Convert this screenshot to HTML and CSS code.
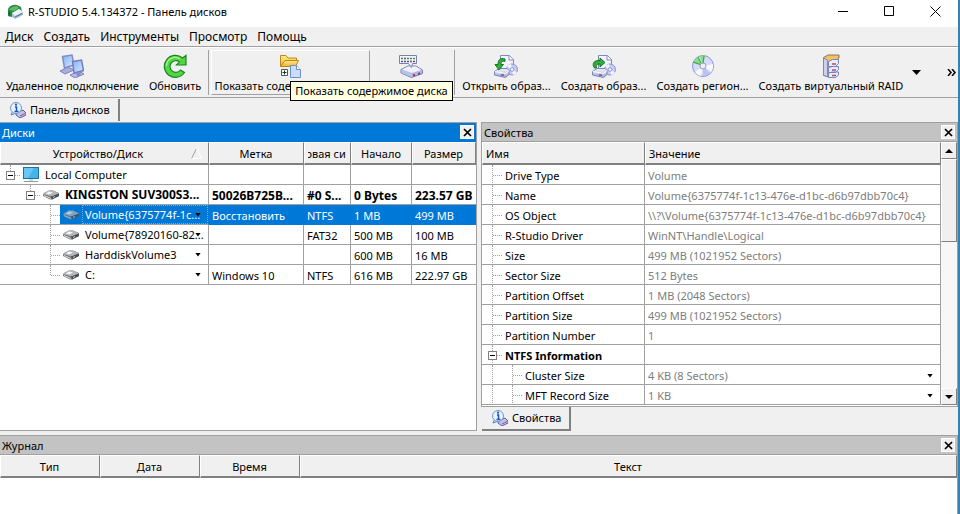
FILE: index.html
```html
<!DOCTYPE html>
<html lang="ru">
<head>
    <meta charset="UTF-8">
    <meta name="viewport" content="width=device-width, initial-scale=1.0">
    <title>R-STUDIO 5.4.134372 - Панель дисков</title>
    <link rel="stylesheet" href="styles.css">
</head>
<body>
    <svg class="sprite" aria-hidden="true">
        <linearGradient id="steel" x1="0" y1="0" x2="0" y2="1">
            <stop offset="0" stop-color="#f4f6fd"/><stop offset="1" stop-color="#9ba6d6"/>
        </linearGradient>
        <linearGradient id="gold" x1="0" y1="0" x2="0" y2="1">
            <stop offset="0" stop-color="#ffeb8a"/><stop offset="1" stop-color="#eeb52c"/>
        </linearGradient>
        <linearGradient id="screen" x1="0" y1="0" x2="1" y2="1">
            <stop offset="0" stop-color="#7fb2f0"/><stop offset="1" stop-color="#d9ecff"/>
        </linearGradient>
        <symbol id="drive" viewBox="0 0 16 10">
            <path d="M0 4.500L1 3 6 .5h4l6 2.500v3L9 9.500H7L0 6z" fill="#77797c"/>
            <path d="M0 4L6 .5h4L16 3.500 9 6.500z" fill="#b4b6b9"/>
            <path d="M3 3.500L6 1.500l4 1-4 2z" fill="#f6f6f6"/>
            <path d="M8 6.500l8-3V6L9 9.500z" fill="#4c4e52"/>
            <path d="M1 5.500l7 3" stroke="#dadada"/>
            <path d="M10 7.500l2-1" stroke="#c5d8c5"/>
        </symbol>
        <symbol id="info" viewBox="0 0 16 16">
            <path d="M6 11l7-3 3 3v2l-6 3-4-3z" fill="#bcc4ea" stroke="#5560a8"/>
            <path d="M10 14l5-2.500" stroke="#b04a70"/>
            <path d="M2.500 9.500L1 13l4-1.500z" fill="#d9ebff" stroke="#5c7fbf"/>
            <circle cx="6" cy="6" r="5.500" fill="#e6f2ff" stroke="#7097d0"/>
            <path d="M5 5h1.500v4M4.500 9.500h4" stroke="#1b55b8" stroke-width="1.500" fill="none"/>
            <circle cx="6" cy="2.700" r="1.100" fill="#1b55b8"/>
        </symbol>
        <symbol id="image" viewBox="0 0 24 24">
            <path d="M6.500 15V1.500h9l4 4V15z" fill="#f3f4fd" stroke="#8287c4"/>
            <path d="M15 1.500V6h4.500" fill="#fff" stroke="#8287c4"/>
            <circle cx="18" cy="15.500" r="5.500" fill="#c9ccf5" stroke="#8c91cf"/>
            <path d="M18 15.500l-5-3a6 6 0 0 1 4-2.500zM18 15.500l5 3a6 6 0 0 1-4 2.500z" fill="#f6f5ff"/>
            <circle cx="18" cy="15.500" r="1.800" fill="#fff" stroke="#8c91cf"/>
            <path d="M.5 17.500L5 14.500h8l2 2v4l-3.500 3L.5 21z" fill="url(#steel)" stroke="#7a84ba"/>
            <path d="M1 17.500l10.500 2L15 16.500" fill="none" stroke="#fff"/>
            <path d="M7 21h3" stroke="#b33a78" stroke-width="1.500"/>
        </symbol>
        <symbol id="cross" viewBox="0 0 9 9">
            <path d="M1 1l7 7M8 1L1 8" stroke="#000" stroke-width="1.700"/>
        </symbol>
    </svg>

    <header class="titlebar">
        <svg class="app-icon" viewBox="0 0 16 16">
            <path d="M1 8a7 6 0 0 1 9-7l4 2 1 5-3 5H5L1 12z" fill="#268b42"/>
            <path d="M2 6c2-3 5-4 8-4l2 2-5 3z" fill="#62b865"/>
            <path d="M1 9l2-2v6z" fill="#155c46"/>
            <path d="M5 9l7-4 4 3v3l-8 4-3-2z" fill="#a9bfd0"/>
            <path d="M5 9l7-4 4 3-8 4z" fill="#edf4f8"/>
            <path d="M8 13l7-3.500" stroke="#4b7191"/>
        </svg>
        <h1 class="title">R-STUDIO 5.4.134372 - Панель дисков</h1>
        <div class="window-buttons">
            <button aria-label="Свернуть"><svg width="11" height="11"><path d="M0 5.500h10" stroke="#000"/></svg></button>
            <button aria-label="Развернуть"><svg width="11" height="11"><path d="M.5 .5h9v9h-9z" fill="none" stroke="#000"/></svg></button>
            <button aria-label="Закрыть"><svg width="11" height="11"><path d="M.5 .5l10 10M10.500 .5l-10 10" stroke="#000"/></svg></button>
        </div>
    </header>

    <nav class="menu">
        <button>Диск</button>
        <button>Создать</button>
        <button>Инструменты</button>
        <button>Просмотр</button>
        <button>Помощь</button>
    </nav>

    <div class="toolbar">
        <button class="tool">
            <svg viewBox="0 0 24 24">
                <path d="M0 17l8-4 6 3-9 4z" fill="#a9addf" stroke="#7e82bd"/>
                <path d="M2.500 2.500L12 1l2 10-9.500 3z" fill="url(#screen)" stroke="#8589c8" stroke-width="1.500"/>
                <path d="M10 21l9-4 5 3-9 4z" fill="#b6baea" stroke="#7e82bd"/>
                <path d="M12.500 7.500l9-1.500 2 10.500-9.500 2.500z" fill="url(#screen)" stroke="#777cc3" stroke-width="1.500"/>
                <path d="M16 19l1 3h3l1-4z" fill="#8a8ecd"/>
            </svg>
            <span>Удаленное подключение</span>
        </button>
        <button class="tool">
            <svg viewBox="0 0 24 24">
                <path d="M21.500 18.500A11 11 0 1 1 19.500 4l3.500-2.500V11H13.500l3-3a5.800 5.800 0 1 0 1 8z" fill="#54d43f" stroke="#168527" stroke-width="1.200"/>
                <path d="M3.500 12A8.500 8.500 0 0 1 17 5" fill="none" stroke="#a7f28e" stroke-width="1.500"/>
            </svg>
            <span>Обновить</span>
        </button>
        <div class="separator"></div>
        <div class="tool-wrap">
            <button class="tool raised" aria-describedby="tip">
                <svg viewBox="0 0 24 24">
                    <path d="M1.500 12.500v-11H7L9 4h8.500v3" fill="url(#gold)" stroke="#b8891c"/>
                    <path d="M1.500 12.500L6 6.500h13.500l-3 6z" fill="url(#gold)" stroke="#b8891c"/>
                    <path d="M2.500 15.500h6v6h-6z" fill="#fff" stroke="#555"/>
                    <path d="M3.500 18.500h4M5.500 16.500v4" stroke="#073c27"/>
                    <path d="M11.500 11.500h6l4 4v8h-10z" fill="#c9dcfb" stroke="#6e8fc8"/>
                    <path d="M17.500 11.500v4h4" fill="#fff" stroke="#6e8fc8"/>
                </svg>
                <span>Показать содержимое диска</span>
            </button>
            <div class="tooltip" id="tip" role="tooltip">Показать содержимое диска</div>
        </div>
        <button class="tool scan" aria-label="Сканировать">
            <svg viewBox="0 0 24 24">
                <path d="M2 15.500l7-3.500h8l6.500 4v3.500l-11 4L2 19z" fill="#b5b9e5" stroke="#777fae"/>
                <path d="M3 15.500l6-3h8l5.500 3.500-10 3z" fill="#eef0fb"/>
                <path d="M12.500 19v4L2.500 19v-3z" fill="#b5c4e8"/>
                <path d="M14 21.500l2-.7M19 20l2-.7" stroke="#9b3566" stroke-width="2"/>
                <path d="M.5 1.500h17v8h-4l-1 4-3-4h-9z" fill="#f4f5ff" stroke="#7882ad"/>
                <path d="M2 4.500h14" stroke="#2e9a58" stroke-width="1.500" stroke-dasharray="2 1"/>
                <path d="M2 7.500h14" stroke="#4b4d9c" stroke-width="1.500" stroke-dasharray="2 1"/>
                <path d="M5 4.500h2M11 7.500h2" stroke="#c2584d" stroke-width="1.500"/>
            </svg>
        </button>
        <div class="separator"></div>
        <button class="tool">
            <svg viewBox="0 0 24 24">
                <use href="#image"/>
                <path d="M11 5C6 3.500 4 6 4 10.500H1L5 16l4.500-5.500H7C7 7.500 8.500 6.500 11 7.500z" fill="#2fae3b" stroke="#14762a"/>
            </svg>
            <span>Открыть образ...</span>
        </button>
        <button class="tool">
            <svg viewBox="0 0 24 24">
                <use href="#image"/>
                <path d="M2.500 14C-1 9 3 6 8 6.500V4l5 4.500L8 13v-3C5 10 3.500 11 4.500 14z" fill="#2fae3b" stroke="#14762a"/>
            </svg>
            <span>Создать образ...</span>
        </button>
        <button class="tool">
            <svg viewBox="0 0 24 24">
                <circle cx="12" cy="12" r="10.500" fill="#d5d9fb" stroke="#8d95ce"/>
                <path d="M12 12l10-2a10 10 0 0 1-2 8zM12 12L4 18a10 10 0 0 0 6 4z" fill="#f8f8ff"/>
                <path d="M12 12v10a10 10 0 0 0 7-3z" fill="#bcc2f5"/>
                <path d="M12 12L2 9a10.500 10.500 0 0 1 5-6zM12 12L9 2a10 10 0 0 1 5-.5z" fill="#86dc83"/>
                <path d="M11 11L2 8M11 11L7 3M12 11l1-9" stroke="#34a54a"/>
                <circle cx="12" cy="12" r="3" fill="#eef0ed" stroke="#9aa0bf"/>
            </svg>
            <span>Создать регион...</span>
        </button>
        <button class="tool">
            <svg viewBox="0 0 24 24">
                <path d="M4.500 3.500L9 1h11v3l-4 3v15l-4 1.500-7.500-2z" fill="#f3c168" stroke="#8c7650"/>
                <path d="M4.500 4v17l4 2V6z" fill="#ccd0ee" stroke="#8188b5"/>
                <path d="M9.500 7.500l4-2h6v4l-3 3h-7zM9.500 13.500l4-1h6v3l-3 3h-7zM9.500 19l4-1h6v3l-3 2.500h-7z" fill="#e9ebfb" stroke="#7b84b4"/>
                <path d="M13 10h4M13 16h4M13 21.500h4" stroke="#a7507e" stroke-width="1.500"/>
            </svg>
            <span>Создать виртуальный RAID</span>
        </button>
        <button class="drop" aria-label="Другие виды RAID"><svg width="9" height="5"><path d="M0 0h9L4.500 5z"/></svg></button>
        <button class="more" aria-label="Ещё"><svg width="9" height="7"><path d="M1 0l3 3.500L1 7M5 0l3 3.500L5 7" fill="none" stroke="#000" stroke-width="1.500"/></svg></button>
    </div>

    <div class="tabs">
        <button class="tab"><svg class="tab-icon"><use href="#info"/></svg>Панель дисков</button>
    </div>

    <main class="panels">
        <section class="panel disks">
            <div class="panel-title active">
                <h2>Диски</h2>
                <button class="close" aria-label="Закрыть"><svg><use href="#cross"/></svg></button>
            </div>
            <table>
                <colgroup>
                    <col class="col-device"><col class="col-label"><col class="col-fs"><col class="col-start"><col>
                </colgroup>
                <thead>
                    <tr>
                        <th>
                            <div class="sorted">Устройство/Диск
                                <svg width="11" height="11"><path d="M5.500 .5L.5 10.500" stroke="#a0a0a0"/><path d="M5.500 .5l5 10H.5" fill="none" stroke="#fff"/></svg>
                            </div>
                        </th>
                        <th>Метка</th>
                        <th><div class="clip">Файловая система</div></th>
                        <th>Начало</th>
                        <th>Размер</th>
                    </tr>
                </thead>
                <tbody>
                    <tr>
                        <td>
                            <div class="node">
                                <i class="branch last"><button class="toggle" aria-label="Свернуть"></button></i>
                                <svg class="pc" viewBox="0 0 16 15"><path d="M0 0h16v12H0z" fill="#1f6f9f"/><path d="M1 1h14v10H1z" fill="#45b3e8"/><path d="M1 1h10L5 11H1z" fill="#68c8f3"/><path d="M6 12h4v2H6z" fill="#d3dadf"/><path d="M1 14.500h14" stroke="#8c9aa3"/></svg>
                                <span>Local Computer</span>
                            </div>
                        </td>
                        <td></td><td></td><td></td><td></td>
                    </tr>
                    <tr class="bold">
                        <td>
                            <div class="node">
                                <i class="gap"></i><i class="branch last"><button class="toggle" aria-label="Свернуть"></button></i>
                                <svg class="disk"><use href="#drive"/></svg>
                                <span>KINGSTON SUV300S3...</span>
                            </div>
                        </td>
                        <td>50026B725B...</td><td>#0 S...</td><td>0 Bytes</td><td>223.57 GB</td>
                    </tr>
                    <tr class="selected">
                        <td>
                            <div class="node">
                                <i class="gap"></i><i class="gap"></i><i class="branch"></i>
                                <svg class="disk"><use href="#drive"/></svg>
                                <span class="focus">Volume{6375774f-1c...</span>
                                <button class="arrow" aria-label="Открыть"></button>
                            </div>
                        </td>
                        <td>Восстановить</td><td>NTFS</td><td>1 MB</td><td>499 MB</td>
                    </tr>
                    <tr>
                        <td>
                            <div class="node">
                                <i class="gap"></i><i class="gap"></i><i class="branch"></i>
                                <svg class="disk"><use href="#drive"/></svg>
                                <span>Volume{78920160-82...</span>
                                <button class="arrow" aria-label="Открыть"></button>
                            </div>
                        </td>
                        <td></td><td>FAT32</td><td>500 MB</td><td>100 MB</td>
                    </tr>
                    <tr>
                        <td>
                            <div class="node">
                                <i class="gap"></i><i class="gap"></i><i class="branch"></i>
                                <svg class="disk"><use href="#drive"/></svg>
                                <span>HarddiskVolume3</span>
                                <button class="arrow" aria-label="Открыть"></button>
                            </div>
                        </td>
                        <td></td><td></td><td>600 MB</td><td>16 MB</td>
                    </tr>
                    <tr>
                        <td>
                            <div class="node">
                                <i class="gap"></i><i class="gap"></i><i class="branch last"></i>
                                <svg class="disk"><use href="#drive"/></svg>
                                <span>C:</span>
                                <button class="arrow" aria-label="Открыть"></button>
                            </div>
                        </td>
                        <td>Windows 10</td><td>NTFS</td><td>616 MB</td><td>222.97 GB</td>
                    </tr>
                </tbody>
            </table>
        </section>

        <section class="props-side">
            <div class="panel props">
                <div class="panel-title">
                    <h2>Свойства</h2>
                    <button class="close" aria-label="Закрыть"><svg><use href="#cross"/></svg></button>
                </div>
                <div class="scroll-area">
                    <table>
                        <colgroup><col class="col-name"><col></colgroup>
                        <thead>
                            <tr><th>Имя</th><th>Значение</th></tr>
                        </thead>
                        <tbody>
                            <tr><td><div class="node"><i class="branch"></i><span>Drive Type</span></div></td><td>Volume</td></tr>
                            <tr><td><div class="node"><i class="branch"></i><span>Name</span></div></td><td>Volume{6375774f-1c13-476e-d1bc-d6b97dbb70c4}</td></tr>
                            <tr><td><div class="node"><i class="branch"></i><span>OS Object</span></div></td><td>\\?\Volume{6375774f-1c13-476e-d1bc-d6b97dbb70c4}</td></tr>
                            <tr><td><div class="node"><i class="branch"></i><span>R-Studio Driver</span></div></td><td>WinNT\Handle\Logical</td></tr>
                            <tr><td><div class="node"><i class="branch"></i><span>Size</span></div></td><td>499 MB (1021952 Sectors)</td></tr>
                            <tr><td><div class="node"><i class="branch"></i><span>Sector Size</span></div></td><td>512 Bytes</td></tr>
                            <tr><td><div class="node"><i class="branch"></i><span>Partition Offset</span></div></td><td>1 MB (2048 Sectors)</td></tr>
                            <tr><td><div class="node"><i class="branch"></i><span>Partition Size</span></div></td><td>499 MB (1021952 Sectors)</td></tr>
                            <tr><td><div class="node"><i class="branch"></i><span>Partition Number</span></div></td><td>1</td></tr>
                            <tr class="bold"><td><div class="node"><i class="branch"><button class="toggle" aria-label="Свернуть"></button></i><span>NTFS Information</span></div></td><td></td></tr>
                            <tr><td><div class="node"><i class="gap lined"></i><i class="branch"></i><span>Cluster Size</span></div></td><td><div class="value">4 KB (8 Sectors)<button class="arrow" aria-label="Изменить"></button></div></td></tr>
                            <tr><td><div class="node"><i class="gap lined"></i><i class="branch"></i><span>MFT Record Size</span></div></td><td><div class="value">1 KB<button class="arrow" aria-label="Изменить"></button></div></td></tr>
                        </tbody>
                    </table>
                    <div class="scrollbar">
                        <button aria-label="Вверх"><svg width="8" height="4"><path d="M0 4h8L4 0z"/></svg></button>
                        <div class="thumb"></div>
                        <button class="down" aria-label="Вниз"><svg width="8" height="4"><path d="M0 0h8L4 4z"/></svg></button>
                    </div>
                </div>
            </div>
            <button class="tab bottom"><svg class="tab-icon"><use href="#info"/></svg>Свойства</button>
        </section>
    </main>

    <section class="panel journal">
        <div class="panel-title">
            <h2>Журнал</h2>
            <button class="close" aria-label="Закрыть"><svg><use href="#cross"/></svg></button>
        </div>
        <table>
            <colgroup><col class="col-log"><col class="col-log"><col class="col-log"><col></colgroup>
            <thead>
                <tr><th>Тип</th><th>Дата</th><th>Время</th><th>Текст</th></tr>
            </thead>
        </table>
    </section>
</body>
</html>
```
FILE: styles.css
```css
* {
    box-sizing: border-box;
}
body {
    display: flex;
    flex-direction: column;
    min-height: 100vh;
    margin: 0;
    background-color: #f0f0f0;
    border-right: 2px solid #3c7fb1;
    font-family: "Noto Sans", "Open Sans", sans-serif;
    font-size: 11px;
    line-height: 16px;
    color: #000;
}
button {
    padding: 0;
    border: none;
    background: none;
    font: inherit;
    color: inherit;
}
h1, h2 {
    margin: 0;
    font-size: 11px;
    font-weight: normal;
}
svg {
    display: block;
    flex: none;
}
.sprite {
    position: absolute;
    width: 0;
    height: 0;
}

/* заголовок окна */
.titlebar {
    display: flex;
    align-items: center;
    height: 27px;
    padding: 0 0 4px 7px;
    background-color: white;
}
.app-icon {
    width: 16px;
    height: 16px;
}
.title {
    flex: 1;
    padding-left: 5px;
}
.window-buttons {
    display: flex;
    height: 22px;
}
.window-buttons button {
    display: flex;
    align-items: center;
    justify-content: center;
    width: 46px;
}
.menu {
    display: flex;
    gap: 10px;
    height: 20px;
    padding-left: 5px;
    border-bottom: 1px solid #a0a0a0;
    font-size: 12px;
}

/* панель инструментов */
.toolbar {
    display: flex;
    align-items: stretch;
    height: 51px;
    padding: 2px 0 2px 1px;
    border-top: 1px solid white;
    border-bottom: 1px solid #a0a0a0;
}
.tool {
    display: flex;
    flex: none;
    flex-direction: column;
    align-items: center;
    padding: 4px 5px 0;
    white-space: nowrap;
}
.tool svg {
    width: 24px;
    height: 24px;
}
.tool-wrap {
    position: relative;
    display: flex;
    flex: none;
}
.raised {
    width: 159px;
    padding: 3px 2px 0;
    border: 1px solid white;
    border-right-color: #a0a0a0;
    border-bottom-color: #a0a0a0;
}
.scan {
    width: 82px;
}
.separator {
    flex: none;
    width: 1px;
    margin: 0 2px;
    background-color: #a0a0a0;
}
.tooltip {
    position: absolute;
    top: 31px;
    left: 79px;
    z-index: 1;
    padding: 1px 4px;
    border: 1px solid #000;
    background-color: #ffffe1;
    white-space: nowrap;
}
.drop {
    padding: 0 4px;
}
.more {
    margin-left: auto;
    padding-right: 2px;
}

/* вкладки */
.tabs {
    height: 24px;
    padding-top: 1px;
}
.tab {
    display: flex;
    align-items: center;
    gap: 4px;
    height: 22px;
    padding: 0 8px 0 10px;
    border-right: 2px solid #808080;
}
.tab-icon {
    width: 16px;
    height: 16px;
}
.tab.bottom {
    align-self: flex-start;
    height: 24px;
    margin-left: 1px;
    border-bottom: 2px solid #808080;
}

/* панели */
.panels {
    display: grid;
    grid-template-columns: minmax(0, 1fr) minmax(0, 1fr);
    gap: 4px;
}
.panel {
    border: 1px solid #a0a0a0;
}
.disks {
    border-left: none;
    background-color: white;
}
.props-side {
    display: flex;
    flex-direction: column;
}
.panel-title {
    display: flex;
    align-items: center;
    justify-content: space-between;
    height: 19px;
    padding: 0 2px;
    border-bottom: 1px solid #a0a0a0;
    background-color: #c3c3c3;
}
.panel-title h2 {
    padding-top: 2px;
}
.panel-title.active {
    background-color: #0078d7;
    border-color: #0078d7;
    color: white;
}
.close {
    display: flex;
    align-items: center;
    justify-content: center;
    width: 14px;
    height: 14px;
    border: 1px solid white;
    background-color: #f0f0f0;
}
.close svg {
    width: 9px;
    height: 9px;
}
table {
    width: 100%;
    table-layout: fixed;
    border-collapse: separate;
    border-spacing: 0;
    background-color: white;
}
th {
    height: 23px;
    padding: 1px 4px 0 3px;
    overflow: hidden;
    border-top: 1px solid white;
    border-left: 1px solid white;
    border-right: 1px solid #808080;
    border-bottom: 2px solid #808080;
    background-color: #f0f0f0;
    font-weight: normal;
    white-space: nowrap;
}
td {
    height: 20px;
    padding: 2px 0 0 3px;
    overflow: hidden;
    border-right: 1px solid #a0a0a0;
    border-bottom: 1px solid #a0a0a0;
    white-space: nowrap;
}
td:first-child {
    padding: 0;
}
td:last-child {
    border-right: none;
}
.bold {
    font-weight: bold;
}
.disks .bold {
    font-size: 12px;
}
.col-device {
    width: 209px;
}
.col-label {
    width: 95px;
}
.col-fs {
    width: 47px;
}
.col-start {
    width: 61px;
}
.col-name {
    width: 163px;
}
.col-log {
    width: 100px;
}
.sorted {
    display: flex;
    align-items: center;
    justify-content: flex-end;
    gap: 48px;
    padding-right: 2px;
}
.clip {
    display: flex;
    justify-content: center;
    overflow: hidden;
}

/* дерево */
.node {
    display: flex;
    align-items: center;
    height: 19px;
}
.node .gap, .node .branch {
    flex: none;
    align-self: flex-start;
    position: relative;
    width: 20px;
    height: 20px;
}
.lined::before, .branch::before {
    content: "";
    position: absolute;
    top: 0;
    bottom: 0;
    left: 10px;
    border-left: 1px dotted #a0a0a0;
}
.branch.last::before {
    bottom: 10px;
}
.branch::after {
    content: "";
    position: absolute;
    top: 10px;
    left: 11px;
    right: 0;
    border-top: 1px dotted #a0a0a0;
}
.toggle {
    position: absolute;
    z-index: 1;
    top: 6px;
    left: 6px;
    width: 9px;
    height: 9px;
    border: 1px solid #808080;
    background: linear-gradient(#000, #000) center / 5px 1px no-repeat white;
}
.node svg {
    width: 16px;
    margin-left: 3px;
}
.disk {
    height: 10px;
}
.pc {
    height: 15px;
}
.disks .node span {
    flex: 1;
    min-width: 0;
    height: 19px;
    margin-left: 3px;
    padding: 2px 0 0 3px;
    overflow: hidden;
}
.props .node span {
    padding: 2px 0 0 3px;
}
.arrow {
    flex: none;
    width: 6px;
    height: 4px;
    margin-right: 7px;
    background-color: #000;
    clip-path: polygon(0 0, 100% 0, 50% 100%);
}
.disks .arrow {
    margin-left: -13px;
}
.selected td {
    border-color: #0078d7;
    background-color: #0078d7;
    color: white;
}
.selected td:first-child {
    border-bottom-color: #a0a0a0;
    background: linear-gradient(#0078d7, #0078d7) 60px 0 no-repeat white;
}
.selected .disk {
    opacity: 0.7;
}
.disks .node .focus {
    outline: 1px dotted #6cb0ea;
    outline-offset: -1px;
}

/* свойства */
.scroll-area {
    display: flex;
    padding-bottom: 1px;
    background-color: white;
}
.props th {
    text-align: left;
}
.props td:last-child {
    border-right: 1px solid #a0a0a0;
    color: #7d7d7d;
}
.value {
    display: flex;
    align-items: center;
    justify-content: space-between;
}
.scrollbar {
    display: flex;
    flex-direction: column;
    flex: none;
    width: 16px;
    background-color: #f7f7f7;
}
.scrollbar button, .thumb {
    display: flex;
    align-items: center;
    justify-content: center;
    height: 17px;
    border: 1px solid white;
    border-right-color: #808080;
    border-bottom-color: #808080;
    background-color: #f0f0f0;
}
.scrollbar .thumb {
    height: 83px;
}
.scrollbar .down {
    margin-top: auto;
}

/* журнал */
.journal {
    flex: 1;
    margin-top: 4px;
    border-left: none;
    border-bottom: none;
    background-color: white;
}
```
